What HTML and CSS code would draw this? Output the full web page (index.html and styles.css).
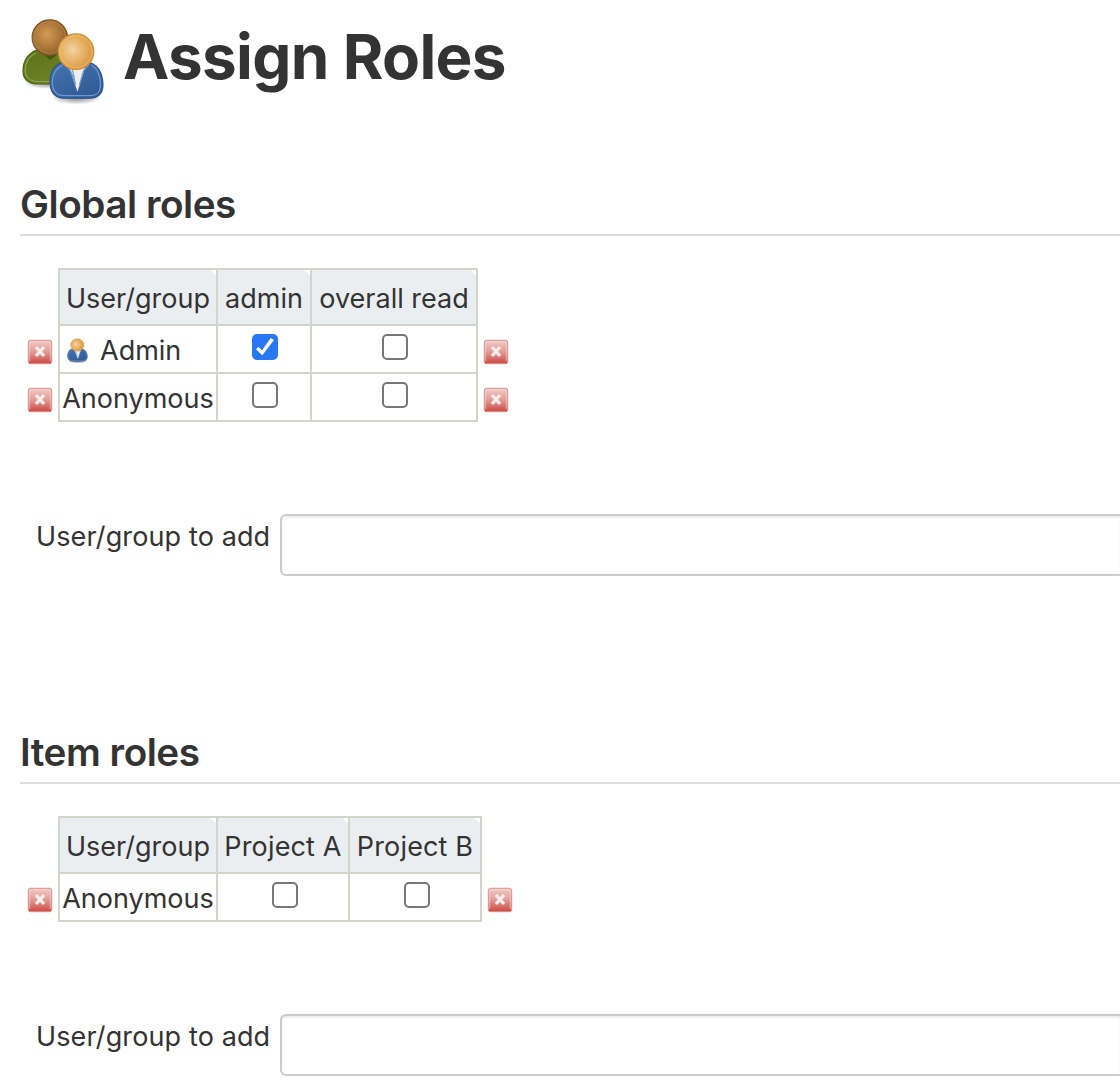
FILE: index.html
```html
<!DOCTYPE html>
<html lang="en">
<head>
<meta charset="utf-8">
<title>Assign Roles</title>
<link rel="stylesheet" href="styles.css">
</head>
<body>
<svg class="defs" width="0" height="0" aria-hidden="true">
  <defs>
    <radialGradient id="tan" cx=".4" cy=".45" r=".65"><stop offset="0" stop-color="#f3d3a2"/><stop offset=".55" stop-color="#e5ae60"/><stop offset="1" stop-color="#d6902f"/></radialGradient>
    <radialGradient id="brown" cx=".42" cy=".42" r=".65"><stop offset="0" stop-color="#d39c55"/><stop offset=".6" stop-color="#a87539"/><stop offset="1" stop-color="#835728"/></radialGradient>
    <radialGradient id="shade"><stop offset="0" stop-color="#333" stop-opacity=".6"/><stop offset="1" stop-color="#333" stop-opacity="0"/></radialGradient>
    <linearGradient id="green" x1="0" y1="0" x2=".6" y2="1"><stop offset="0" stop-color="#5b721c"/><stop offset="1" stop-color="#6f8225"/></linearGradient>
    <linearGradient id="blue" x1="0" y1="0" x2=".6" y2="1"><stop offset="0" stop-color="#4575b3"/><stop offset="1" stop-color="#315b96"/></linearGradient>
    <linearGradient id="red" x1="0" y1="0" x2="0" y2="1"><stop offset="0" stop-color="#f0cbc8"/><stop offset=".45" stop-color="#e3a09b"/><stop offset="1" stop-color="#cc4941"/></linearGradient>
    <symbol id="remove" viewBox="0 0 26 26">
      <rect x="1.300" y="1.300" width="23.400" height="23.400" rx="2" fill="url(#red)" stroke="#dc918b"/>
      <path d="M2.700 22V2.700h20.600V22" fill="none" stroke="#f5d8d5" stroke-opacity=".6"/>
      <path d="M9 8l8 9m0-9l-8 9" fill="none" stroke="#f6eeee" stroke-width="3.300"/>
    </symbol>
    <symbol id="person" viewBox="0 0 56 74" preserveAspectRatio="none">
      <ellipse cx="28" cy="66" rx="25" ry="7" fill="url(#shade)"/>
      <path d="M1.500 50C1.500 40 7 32 16 30h22c10 2 16 10 16.500 23C54.500 62 49 66.500 42 66.500H15C6 66.500 1.500 60 1.500 50z" fill="url(#blue)" stroke="#2a5592" stroke-width="1.200"/>
      <path d="M43 33c6 4 9 12 9 20 0 7-4 11-10 11H15C7.500 64 3.700 58 3.700 50c.2-7 4-14 10-16.500" fill="none" stroke="#7299cc" stroke-width="1.200"/>
      <path d="M20.500 36h16l-7.500 24z" fill="#eeeeed"/>
      <path d="M16 33l6 6 5 14-3-15M40 33l-5 6-4 14" fill="none" stroke="#7299cc" stroke-width="1.200"/>
      <circle cx="27.500" cy="20" r="17.800" fill="url(#tan)" stroke="#cd8f37" stroke-width="1.200"/>
      <circle cx="27.500" cy="20" r="16" fill="none" stroke="#f0c37a" stroke-opacity=".6" stroke-width="1.200"/>
    </symbol>
  </defs>
</svg>
<header class="page-title">
  <svg class="people" viewBox="0 0 88 88" aria-hidden="true">
    <ellipse cx="28" cy="65" rx="24" ry="6" fill="url(#shade)"/>
    <path d="M3 53C3 43 8 35 17 32h24c10 3 15 10 15 20 0 10-5 14-14 14H18C8 66 3 61 3 53z" fill="url(#green)" stroke="#4f641a" stroke-width="1.200"/>
    <path d="M16 35C9 38 5.200 45 5.200 53c.5 7 5.800 10.500 12.800 10.500h24" fill="none" stroke="#93a451" stroke-width="1.200"/>
    <path d="M22 35l8 7 7-5" fill="#46580f"/>
    <circle cx="29.800" cy="19.500" r="17.700" fill="url(#brown)" stroke="#805526" stroke-width="1.200"/>
    <circle cx="29.800" cy="19.500" r="15.800" fill="none" stroke="#bd894a" stroke-opacity=".55" stroke-width="1.200"/>
    <use href="#person" x="28.500" y="13.700" width="56" height="74"/>
  </svg>
  <h1>Assign Roles</h1>
</header>
<section class="section">
  <h2>Global roles</h2>
  <table class="roles">
    <colgroup><col class="action"><col class="name"><col class="admin"><col class="overall"><col class="action"></colgroup>
    <tr class="head"><td></td><th>User/group</th><th>admin</th><th>overall read</th><td></td></tr>
    <tr>
      <td class="del"><svg class="remove"><use href="#remove"/></svg></td>
      <td class="cell"><span class="user-line"><svg class="avatar"><use href="#person"/></svg><span>Admin</span></span></td>
      <td class="cell"><input type="checkbox" class="box" checked></td>
      <td class="cell"><input type="checkbox" class="box"></td>
      <td class="del after"><svg class="remove"><use href="#remove"/></svg></td>
    </tr>
    <tr>
      <td class="del"><svg class="remove"><use href="#remove"/></svg></td>
      <td class="cell">Anonymous</td>
      <td class="cell"><input type="checkbox" class="box"></td>
      <td class="cell"><input type="checkbox" class="box"></td>
      <td class="del after"><svg class="remove"><use href="#remove"/></svg></td>
    </tr>
  </table>
  <div class="add"><label for="global-user">User/group to add</label><input id="global-user" class="text" type="text"></div>
</section>
<section class="section items">
  <h2>Item roles</h2>
  <table class="roles">
    <colgroup><col class="action"><col class="name"><col class="project"><col class="project"><col class="action"></colgroup>
    <tr class="head"><td></td><th>User/group</th><th class="wide">Project A</th><th class="wide">Project B</th><td></td></tr>
    <tr>
      <td class="del"><svg class="remove"><use href="#remove"/></svg></td>
      <td class="cell">Anonymous</td>
      <td class="cell"><input type="checkbox" class="box"></td>
      <td class="cell"><input type="checkbox" class="box"></td>
      <td class="del after"><svg class="remove"><use href="#remove"/></svg></td>
    </tr>
  </table>
  <div class="add"><label for="item-user">User/group to add</label><input id="item-user" class="text" type="text"></div>
</section>
</body>
</html>
```
FILE: styles.css
```css
* { box-sizing: border-box; }
body { margin: 0; padding: 18px 0 0 20px; background: #fff; color: #333; font: 27px/32px Inter, "Liberation Sans", sans-serif; }
.defs { position: absolute; }
.page-title { display: flex; height: 164px; }
.people { width: 88px; height: 88px; flex: none; filter: blur(.45px); }
h1 { margin: 0 0 0 15px; font-size: 62px; line-height: 78px; font-weight: 700; letter-spacing: -.65px; white-space: nowrap; }
.section { height: 548px; }
.section.items { height: auto; }
h2 { margin: 0; height: 54px; border-bottom: 2px solid #dedede; font-size: 38.7px; line-height: 45px; font-weight: 600; letter-spacing: -.48px; white-space: nowrap; }
.roles { margin: 32px 0 0 4px; border-collapse: collapse; table-layout: fixed; width: max-content; }
.action { width: 35px; }
.name { width: 158px; }
.admin { width: 94px; }
.overall { width: 166px; }
.project { width: 132px; }
.roles tr { height: 48px; }
.roles .head { height: 56px; }
.roles td, .roles th { padding: 0; font-weight: 400; text-align: center; white-space: nowrap; vertical-align: middle; }
.roles th, .roles .cell { border: 2px solid #d3d4cc; }
.roles th { background: linear-gradient(225deg, #fff 3px, #ebeef1 4.5px); padding-top: 3px; }
.roles .wide { letter-spacing: .15px; }
.roles .cell { padding-top: 3px; }
.user-line { display: flex; align-items: center; gap: 12px; padding-left: 7px; }
.avatar { width: 21px; height: 26px; display: block; filter: blur(.4px); }
.remove { width: 26px; height: 26px; display: block; margin: 6px 0 0 3px; filter: blur(.35px); }
.after .remove { margin-left: 5px; }
.box { appearance: none; display: block; width: 26px; height: 26px; margin: -7px auto 0; border: 2px solid #767676; border-radius: 5px; background: #fff; transform: translateX(1px); }
.box:checked { border: 0; background: #2878f6; }
.box:checked::after { content: ""; display: block; width: 26px; height: 26px; background: #fff; clip-path: polygon(4px 15.3px, 6.4px 13px, 10px 16.3px, 18.7px 4px, 22px 6px, 10.3px 21.3px); }
.items .box { transform: translateX(2px); }
.add { display: flex; margin-top: 92px; padding-left: 16px; }
label { width: 244px; flex: none; padding-top: 7px; letter-spacing: .12px; white-space: nowrap; }
.text { flex: 1; min-width: 0; height: 62px; border: 2px solid #ccc; border-right: 0; border-radius: 6px 0 0 6px; background: #fff; box-shadow: inset 0 2px 2px rgba(0,0,0,.07); }
```
